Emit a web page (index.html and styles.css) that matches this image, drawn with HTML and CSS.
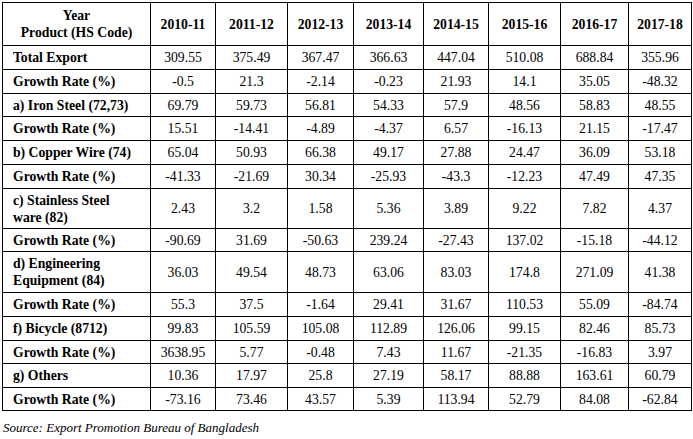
FILE: index.html
```html
<!DOCTYPE html>
<html>
<head>
<meta charset="utf-8">
<link rel="stylesheet" href="styles.css">
</head>
<body>
<table class="data">
  <colgroup>
    <col class="c-label"><col class="c1"><col class="c2"><col class="c3"><col class="c4"><col class="c5"><col class="c6"><col class="c7"><col class="c8">
  </colgroup>
  <thead>
    <tr class="r-head">
      <th class="lbl-head">Year<br>Product (HS Code)</th>
      <th>2010-11</th><th>2011-12</th><th>2012-13</th><th>2013-14</th><th>2014-15</th><th>2015-16</th><th>2016-17</th><th>2017-18</th>
    </tr>
  </thead>
  <tbody>
    <tr class="h24"><td class="lbl">Total Export</td><td>309.55</td><td>375.49</td><td>367.47</td><td>366.63</td><td>447.04</td><td>510.08</td><td>688.84</td><td>355.96</td></tr>
    <tr class="h24"><td class="lbl">Growth Rate (%)</td><td>-0.5</td><td>21.3</td><td>-2.14</td><td>-0.23</td><td>21.93</td><td>14.1</td><td>35.05</td><td>-48.32</td></tr>
    <tr class="h23"><td class="lbl">a) Iron Steel (72,73)</td><td>69.79</td><td>59.73</td><td>56.81</td><td>54.33</td><td>57.9</td><td>48.56</td><td>58.83</td><td>48.55</td></tr>
    <tr class="h24"><td class="lbl">Growth Rate (%)</td><td>15.51</td><td>-14.41</td><td>-4.89</td><td>-4.37</td><td>6.57</td><td>-16.13</td><td>21.15</td><td>-17.47</td></tr>
    <tr class="h24"><td class="lbl">b) Copper Wire (74)</td><td>65.04</td><td>50.93</td><td>66.38</td><td>49.17</td><td>27.88</td><td>24.47</td><td>36.09</td><td>53.18</td></tr>
    <tr class="h24"><td class="lbl">Growth Rate (%)</td><td>-41.33</td><td>-21.69</td><td>30.34</td><td>-25.93</td><td>-43.3</td><td>-12.23</td><td>47.49</td><td>47.35</td></tr>
    <tr class="h40"><td class="lbl">c) Stainless Steel<br>ware (82)</td><td>2.43</td><td>3.2</td><td>1.58</td><td>5.36</td><td>3.89</td><td>9.22</td><td>7.82</td><td>4.37</td></tr>
    <tr class="h23"><td class="lbl">Growth Rate (%)</td><td>-90.69</td><td>31.69</td><td>-50.63</td><td>239.24</td><td>-27.43</td><td>137.02</td><td>-15.18</td><td>-44.12</td></tr>
    <tr class="h41"><td class="lbl">d) Engineering<br>Equipment (84)</td><td>36.03</td><td>49.54</td><td>48.73</td><td>63.06</td><td>83.03</td><td>174.8</td><td>271.09</td><td>41.38</td></tr>
    <tr class="h24"><td class="lbl">Growth Rate (%)</td><td>55.3</td><td>37.5</td><td>-1.64</td><td>29.41</td><td>31.67</td><td>110.53</td><td>55.09</td><td>-84.74</td></tr>
    <tr class="h24"><td class="lbl">f) Bicycle (8712)</td><td>99.83</td><td>105.59</td><td>105.08</td><td>112.89</td><td>126.06</td><td>99.15</td><td>82.46</td><td>85.73</td></tr>
    <tr class="h23"><td class="lbl">Growth Rate (%)</td><td>3638.95</td><td>5.77</td><td>-0.48</td><td>7.43</td><td>11.67</td><td>-21.35</td><td>-16.83</td><td>3.97</td></tr>
    <tr class="h24"><td class="lbl">g) Others</td><td>10.36</td><td>17.97</td><td>25.8</td><td>27.19</td><td>58.17</td><td>88.88</td><td>163.61</td><td>60.79</td></tr>
    <tr class="h23"><td class="lbl">Growth Rate (%)</td><td>-73.16</td><td>73.46</td><td>43.57</td><td>5.39</td><td>113.94</td><td>52.79</td><td>84.08</td><td>-62.84</td></tr>
  </tbody>
</table>
<p class="source">Source: Export Promotion Bureau of Bangladesh</p>
</body>
</html>
```

FILE: styles.css
```css
html, body {
  margin: 0;
  padding: 0;
  background: #ffffff;
}
body {
  font-family: "Liberation Serif", "DejaVu Serif", serif;
  color: #000;
}
.data {
  font-family: "Liberation Serif", "DejaVu Serif", serif;
  border-collapse: collapse;
  table-layout: fixed;
  width: 690px;
  margin: 2px 0 0 2px;
  font-size: 13.7px;
}
.c-label { width: 148px; }
.c1 { width: 65px; }
.c2 { width: 72px; }
.c3 { width: 66px; }
.c4 { width: 70px; }
.c5 { width: 65px; }
.c6 { width: 72px; }
.c7 { width: 68px; }
.c8 { width: 63px; }
.data th, .data td {
  border: 1px solid #000;
  padding: 0;
  text-align: center;
  vertical-align: middle;
  line-height: 17px;
}
.data th {
  font-weight: bold;
}
.data td.lbl {
  text-align: left;
  font-weight: bold;
  padding-left: 10px;
}
.r-head { height: 43px; }
.h23 { height: 23px; }
.h24 { height: 24px; }
.h40 { height: 40px; }
.h41 { height: 41px; }
.source {
  font-family: "Liberation Serif", "DejaVu Serif", serif;
  margin: 9px 0 0 3px;
  font-style: italic;
  font-size: 13px;
}
```
